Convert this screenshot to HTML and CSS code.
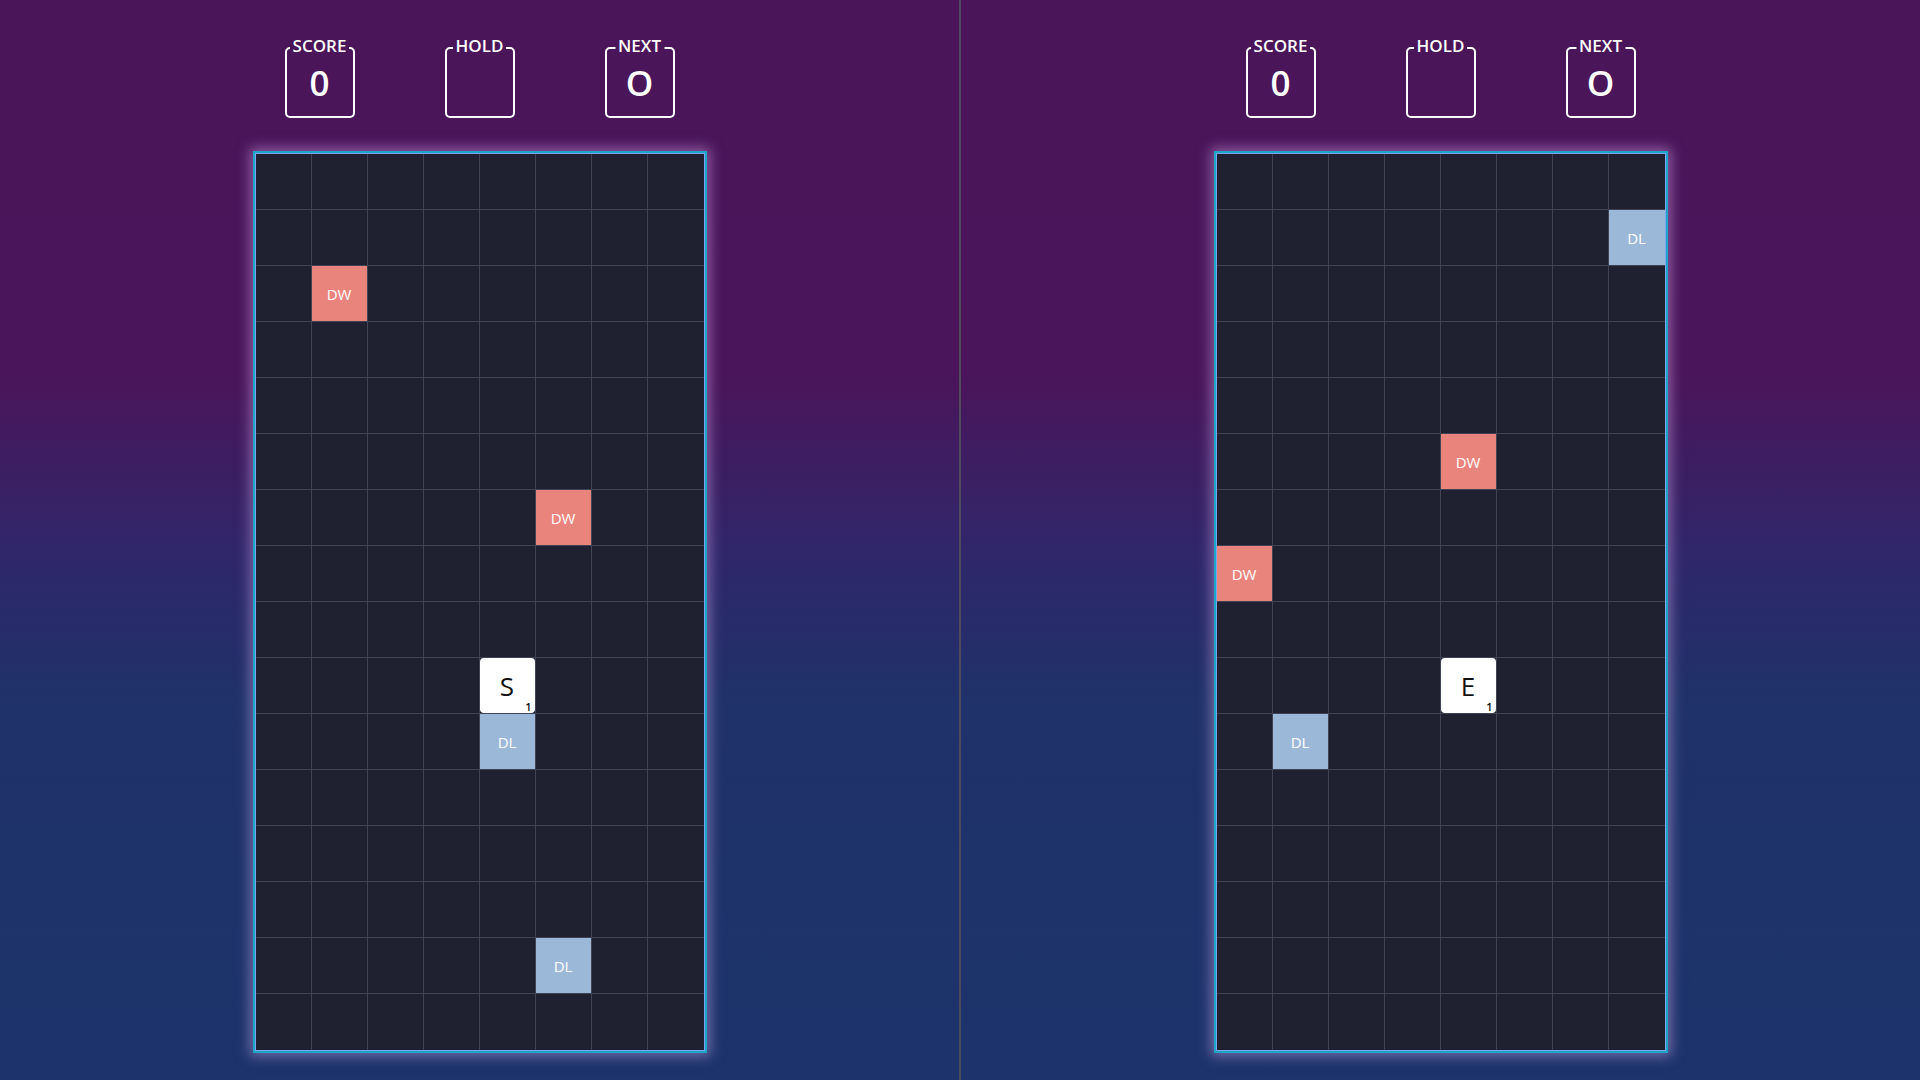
FILE: index.html
```html
<!DOCTYPE html>
<html lang="en">
<head>
<meta charset="utf-8">
<title>Word Tetris</title>
<link rel="stylesheet" href="styles.css">
</head>
<body>
<div class="screen">
  <section class="pane">
    <div class="hud">
      <div class="stat"><span class="stat-label">SCORE</span><span class="stat-value">0</span></div>
      <div class="stat"><span class="stat-label">HOLD</span><span class="stat-value"></span></div>
      <div class="stat"><span class="stat-label">NEXT</span><span class="stat-value">O</span></div>
    </div>
    <div class="board">
      <div class="grid" id="g1"></div>
    </div>
  </section>
  <section class="pane pane-right">
    <div class="hud">
      <div class="stat"><span class="stat-label">SCORE</span><span class="stat-value">0</span></div>
      <div class="stat"><span class="stat-label">HOLD</span><span class="stat-value"></span></div>
      <div class="stat"><span class="stat-label">NEXT</span><span class="stat-value">O</span></div>
    </div>
    <div class="board">
      <div class="grid" id="g2"></div>
    </div>
  </section>
</div>
<script src="script.js"></script>
</body>
</html>
```

FILE: script.js
```js
(function () {
  var boards = {
    g1: [
      { c: 1, r: 2, t: 'dw' },
      { c: 5, r: 6, t: 'dw' },
      { c: 4, r: 9, t: 'letter', l: 'S', n: '1' },
      { c: 4, r: 10, t: 'dl' },
      { c: 5, r: 14, t: 'dl' }
    ],
    g2: [
      { c: 7, r: 1, t: 'dl' },
      { c: 4, r: 5, t: 'dw' },
      { c: 0, r: 7, t: 'dw' },
      { c: 4, r: 9, t: 'letter', l: 'E', n: '1' },
      { c: 1, r: 10, t: 'dl' }
    ]
  };
  Object.keys(boards).forEach(function (id) {
    var grid = document.getElementById(id);
    var items = boards[id];
    for (var r = 0; r < 16; r++) {
      for (var c = 0; c < 8; c++) {
        var cell = document.createElement('div');
        cell.className = 'cell';
        if (c === 7) cell.className += ' last-col';
        if (r === 15) cell.className += ' last-row';
        items.forEach(function (it) {
          if (it.c === c && it.r === r) {
            var tile = document.createElement('div');
            if (it.t === 'letter') {
              tile.className = 'tile tile-letter';
              tile.innerHTML = '<span class="letter">' + it.l + '</span><span class="points">' + it.n + '</span>';
            } else {
              tile.className = 'tile tile-' + it.t;
              tile.textContent = it.t.toUpperCase();
            }
            cell.appendChild(tile);
          }
        });
        grid.appendChild(cell);
      }
    }
  });
})();
```

FILE: styles.css
```css
html, body {
  margin: 0;
  padding: 0;
  width: 1920px;
  height: 1080px;
  overflow: hidden;
}

body {
  font-family: "Open Sans", "Noto Sans", sans-serif;
  color: #ffffff;
  background: linear-gradient(to bottom, #4b1559 0%, #4a155a 35%, #30276a 51%, #1f3269 65%, #1c346b 100%);
}

.screen {
  display: flex;
  width: 1920px;
  height: 1080px;
}

.pane {
  flex: 1;
  display: flex;
  flex-direction: column;
  align-items: center;
  padding-top: 47px;
  box-sizing: border-box;
}

.pane-right {
  border-left: 2px solid #4f4b5c;
}

.hud {
  display: flex;
  gap: 90px;
}

.stat {
  position: relative;
  width: 70px;
  height: 71px;
  box-sizing: border-box;
  border: 2px solid #ffffff;
  border-radius: 5px;
  display: flex;
  align-items: center;
  justify-content: center;
}

.stat-label {
  position: absolute;
  top: -13px;
  left: 50%;
  transform: translateX(-50%);
  padding: 0 3px;
  background: #4b1559;
  font-size: 17px;
  font-weight: 600;
  line-height: 20px;
  white-space: nowrap;
}

.stat-value {
  font-size: 35px;
  font-weight: 600;
  line-height: 1;
  margin-top: 0;
}

.board {
  margin-top: 33px;
  border: 2px solid #1ea6c9;
  padding: 1px;
  background: #7ba4f0;
  box-shadow: 0 0 12px 3px rgba(205, 170, 235, 0.5);
}

.grid {
  display: grid;
  grid-template-columns: repeat(8, 56px);
  grid-template-rows: repeat(16, 56px);
  background: #1f2131;
}

.cell {
  border-right: 1px solid #3f4354;
  border-bottom: 1px solid #3f4354;
  display: flex;
}

.cell.last-col {
  border-right: none;
}

.cell.last-row {
  border-bottom: none;
}

.tile {
  flex: 1;
  display: flex;
  align-items: center;
  justify-content: center;
  font-size: 15px;
  font-weight: 500;
  color: #ffffff;
}

.tile-dw {
  background: #e9847d;
}

.tile-dl {
  background: #9bb8d8;
}

.tile-letter {
  position: relative;
  background: #ffffff;
  border-radius: 4px;
  color: #111111;
}

.letter {
  font-size: 26px;
  font-weight: 500;
  line-height: 1;
}

.points {
  position: absolute;
  right: 3px;
  bottom: 1px;
  font-size: 11px;
  font-weight: 600;
  line-height: 1;
}
```
